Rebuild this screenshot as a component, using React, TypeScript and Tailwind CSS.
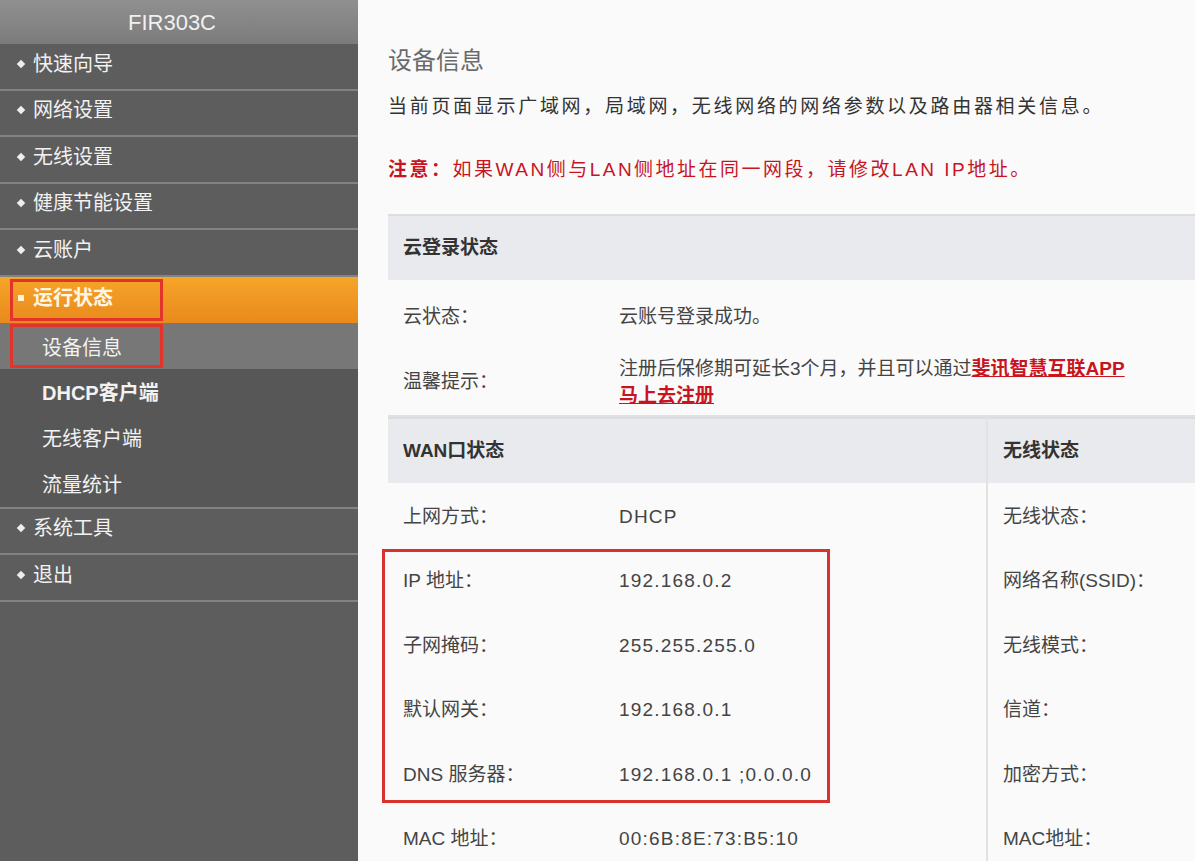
import React from 'react';

const font = { fontFamily: '"Liberation Sans", "Noto Sans CJK SC", sans-serif' };

const topMenu = ['快速向导', '网络设置', '无线设置', '健康节能设置', '云账户'];
const subMenu = ['DHCP客户端', '无线客户端', '流量统计'];

const wanRows = [
  { label: '上网方式：', value: 'DHCP', right: '无线状态：' },
  { label: 'IP 地址：', value: '192.168.0.2', right: '网络名称(SSID)：' },
  { label: '子网掩码：', value: '255.255.255.0', right: '无线模式：' },
  { label: '默认网关：', value: '192.168.0.1', right: '信道：' },
  { label: 'DNS 服务器：', value: '192.168.0.1 ;0.0.0.0', right: '加密方式：' },
  { label: 'MAC 地址：', value: '00:6B:8E:73:B5:10', right: 'MAC地址：' },
];

const MenuItem: React.FC<{ label: string }> = ({ label }) => (
  <div className="h-[46.5px] flex items-center pb-[5px] pl-[18px] border-b-2 border-[#838383] text-[20px] text-[#f2f2f2]">
    <span className="w-[6px] h-[6px] bg-[#eeeeee] rotate-45 mr-[9px]"></span>
    {label}
  </div>
);

const Sidebar: React.FC = () => (
  <div className="w-[358px] shrink-0 bg-[#5d5d5d] min-h-[861px]">
    <div className="h-[44px] bg-gradient-to-b from-[#909090] to-[#7b7b7b] flex items-center justify-center text-[22px] text-[#f0f0f0] pr-[14px]">
      FIR303C
    </div>
    {topMenu.map(m => <MenuItem key={m} label={m} />)}

    {/* 运行状态 - active */}
    <div className="relative h-[46px] flex items-center pb-[3px] pl-[18px] bg-gradient-to-b from-[#f6a52a] to-[#e8891c] text-[20px] font-bold text-[#fff6e6]">
      <span className="w-[6px] h-[6px] bg-[#fff3dd] mr-[9px]"></span>
      运行状态
      <div className="absolute left-[10px] top-[2px] w-[153px] h-[42px] border-[3px] border-[#e2342b]"></div>
    </div>

    {/* 设备信息 - selected sub */}
    <div className="relative h-[46px] flex items-center pt-[4px] pl-[42px] bg-[#777777] text-[20px] text-[#f2f2f2]">
      设备信息
      <div className="absolute left-[10px] top-[1px] w-[153px] h-[44px] border-[3px] border-[#e2342b]"></div>
    </div>

    <div className="bg-[#575757] border-b-2 border-[#838383]">
      {subMenu.map((m, i) => (
        <div key={m} className={`h-[46px] flex items-center pt-[2px] pl-[42px] text-[20px] text-[#f2f2f2] ${i === 0 ? 'font-bold' : ''}`}>
          {m}
        </div>
      ))}
    </div>
    <MenuItem label="系统工具" />
    <MenuItem label="退出" />
  </div>
);

const HeaderRow: React.FC<{ children: React.ReactNode }> = ({ children }) => (
  <div className="h-[66px] bg-[#e9eaed] border-t-2 border-[#dcdde0] flex items-center pl-[15px] text-[19px] font-bold text-[#333]">
    {children}
  </div>
);

export default function App() {
  return (
    <div className="flex w-[1195px] h-[861px] overflow-hidden bg-[#fafafa]" style={font}>
      <Sidebar />
      <div className="flex-1 pl-[30px] pt-[45px] overflow-hidden">
        <div className="text-[24px] text-[#6a6a6a] leading-[32px]">设备信息</div>
        <div className="mt-[17px] text-[19px] text-[#333] tracking-[2.7px] leading-[26px]">
          当前页面显示广域网，局域网，无线网络的网络参数以及路由器相关信息。
        </div>
        <div className="mt-[37px] text-[19px] text-[#c8141e] tracking-[2.5px] leading-[26px]">
          <span className="font-bold">注意：</span>如果WAN侧与LAN侧地址在同一网段，请修改LAN IP地址。
        </div>

        <div className="mt-[31px] w-[1000px] text-[#444]">
          <HeaderRow>云登录状态</HeaderRow>
          <div className="h-[69px] flex items-center pt-[5px] text-[19px]">
            <div className="w-[231px] pl-[15px]">云状态：</div>
            <div>云账号登录成功。</div>
          </div>
          <div className="h-[68px] flex items-center text-[19px] border-b-2 border-[#e0e0e0]">
            <div className="w-[231px] pl-[15px]">温馨提示：</div>
            <div className="leading-[27px]">
              <div>
                注册后保修期可延长3个月，并且可以通过
                <span className="text-[#c8141e] underline font-bold">斐讯智慧互联APP</span>
              </div>
              <div className="text-[#c8141e] underline font-bold">马上去注册</div>
            </div>
          </div>

          <div className="relative flex">
            <div className="w-[600px] border-r-2 border-[#e2e2e2]">
              <HeaderRow>WAN口状态</HeaderRow>
              {wanRows.map(r => (
                <div key={r.label} className="h-[64.5px] flex items-center pt-[3px] text-[19px]">
                  <div className="w-[231px] pl-[15px]">{r.label}</div>
                  <div className="tracking-[1.2px]">{r.value}</div>
                </div>
              ))}
            </div>
            <div className="flex-1">
              <HeaderRow>无线状态</HeaderRow>
              {wanRows.map(r => (
                <div key={r.right} className="h-[64.5px] flex items-center pt-[3px] pl-[15px] text-[19px]">
                  {r.right}
                </div>
              ))}
            </div>
            <div className="absolute left-[-6px] top-[132px] w-[448px] h-[254px] border-[3px] border-[#d9322e]"></div>
          </div>
        </div>
      </div>
    </div>
  );
}
